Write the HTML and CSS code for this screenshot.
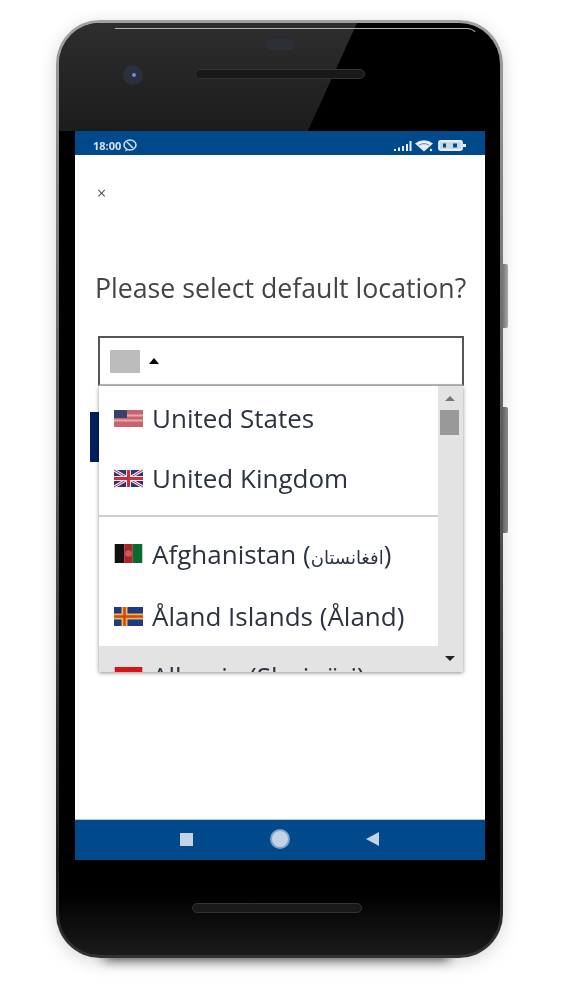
FILE: index.html
```html
<!DOCTYPE html>
<html lang="en">
<head>
    <meta charset="UTF-8">
    <meta name="viewport" content="width=device-width, initial-scale=1.0">
    <title>Select location</title>
    <link rel="stylesheet" href="styles.css">
</head>
<body>

<div class="phone">
    <div class="glare"></div>
    <div class="top-line"></div>
    <div class="side-btn power"></div>
    <div class="side-btn volume"></div>
    <div class="sensor"></div>
    <div class="camera"><span></span></div>
    <div class="speaker speaker-top"></div>

    <div class="screen">
        <div class="status-bar">
            <div class="status-left">
                <span class="time">18:00</span>
                <svg width="14" height="13" viewBox="0 0 14 13"><ellipse cx="7" cy="6" rx="6" ry="5" fill="none" stroke="#d5e0ec" stroke-width="1.500"/><path d="M4 3l6 6" stroke="#d5e0ec" stroke-width="1.500"/><path d="M3 10l-1 2.500 3-1.500z" fill="#d5e0ec"/></svg>
            </div>
            <div class="status-right">
                <svg width="19" height="10" viewBox="0 0 19 10"><path d="M1 8h2v2H1zM5 6.500h2V10H5zM9 5h2v5H9zM13 3h2v7h-2zM16.500 0h2v10h-2z" fill="#e6edf5"/></svg>
                <svg width="20" height="13" viewBox="0 0 20 13"><path d="M0 4.500Q9-2 18 4.500L9 12.500z" fill="#e6edf5"/><path d="M4 6.200Q9 3 14 6.200" stroke="#5f8ab5" fill="none"/><circle cx="16" cy="11" r="1.200" fill="#e6edf5"/></svg>
                <svg width="28" height="11" viewBox="0 0 28 11"><rect x="1" y="1" width="23" height="9" rx="1.500" fill="#c9d8e8" stroke="#e6edf5" stroke-width="1.800"/><rect x="5" y="3.500" width="3" height="4" fill="#004a8c"/><rect x="15" y="3.500" width="4" height="4" fill="#004a8c"/><path d="M25 4h3v3h-3z" fill="#e6edf5"/></svg>
            </div>
        </div>

        <div class="content">
            <div class="close">×</div>
            <h1>Please select default location?</h1>
            <div class="picker">
                <div class="select-box">
                    <span class="flag-empty"></span>
                    <span class="caret"></span>
                </div>
                <div class="dropdown">
                    <ul class="country-list">
                        <li>
                            <svg class="flag" viewBox="0 0 29 17"><rect width="29" height="17" fill="#c9646f"/><path d="M0 4.500h29v2H0zM0 9.500h29v2H0z" fill="#e2a8ae"/><rect width="13" height="8" fill="#3a3f70"/></svg>
                            United States
                        </li>
                        <li>
                            <svg class="flag" viewBox="0 0 29 17"><rect width="29" height="17" fill="#2b3474"/><path d="M0 0l29 17M29 0L0 17" stroke="#eee" stroke-width="3"/><path d="M0 0l29 17M29 0L0 17" stroke="#c8303f" stroke-width="1"/><path d="M14.500 0v17M0 8.500h29" stroke="#eee" stroke-width="5"/><path d="M14.500 0v17M0 8.500h29" stroke="#c8303f" stroke-width="3"/></svg>
                            United Kingdom
                        </li>
                        <li class="divider"></li>
                        <li class="tall">
                            <svg class="flag" viewBox="0 0 29 20"><rect width="10" height="20" fill="#111"/><rect x="10" width="9" height="20" fill="#a8262c"/><rect x="19" width="10" height="20" fill="#0a6b2e"/><circle cx="14.500" cy="10" r="3.500" fill="#c85a5a"/></svg>
                            <span>Afghanistan (<span class="native">افغانستان</span>)</span>
                        </li>
                        <li class="tall">
                            <svg class="flag" viewBox="0 0 29 19"><rect width="29" height="19" fill="#1d3a86"/><path d="M0 9.500h29M10.500 0v19" stroke="#e8c040" stroke-width="6"/><path d="M0 9.500h29M10.500 0v19" stroke="#d8401e" stroke-width="2.500"/></svg>
                            Åland Islands (Åland)
                        </li>
                        <li class="active">
                            <svg class="flag" viewBox="0 0 29 20"><rect width="29" height="20" fill="#d8141a"/><circle cx="14.500" cy="10" r="4" fill="#2a1010"/></svg>
                            Albania (Shqipëri)
                        </li>
                    </ul>
                    <div class="scrollbar">
                        <span class="arrow-up"></span>
                        <span class="thumb"></span>
                        <span class="arrow-down"></span>
                    </div>
                </div>
            </div>
            <div class="next-btn"></div>
        </div>

        <div class="nav-bar">
            <span class="nav-square"></span>
            <span class="nav-circle"></span>
            <span class="nav-back"></span>
        </div>
    </div>

    <div class="speaker speaker-bottom"></div>
    <div class="shadow"></div>
</div>

</body>
</html>
```

FILE: styles.css
```css
:root {
    --blue: #004a8c;
    --nav-icon: #c3d3e4;
    --scroll: #e3e3e3;
    --text: #2c3442;
}

body {
    box-sizing: border-box;
    min-height: 100vh;
    margin: 0;
    padding-top: 20px;
    overflow: hidden;
    background: #ffffff;
    font-family: "Open Sans", "DejaVu Sans", sans-serif;
}

/* Device frame */
.phone {
    position: relative;
    box-sizing: border-box;
    width: 447px;
    height: 938px;
    margin-left: 56px;
    padding: 108px 15px 0 16px;
    border: 3px solid transparent;
    border-radius: 44px;
    background:
        linear-gradient(#000 0, #000 870px, #1b1b1b 100%) padding-box,
        linear-gradient(#a0a0a0 0, #6a6a6a 35%, #3a3a3a 70%, #1c1c1c 90%, #333 100%) border-box;
    box-shadow: 0 4px 18px rgba(0, 0, 0, 0.16);
}

.glare {
    position: absolute;
    top: 0;
    left: 0;
    width: 298px;
    height: 108px;
    border-top-left-radius: 41px;
    background: linear-gradient(#2e2e2e, #1c1c1c);
    clip-path: polygon(0 0, 100% 0, 83.500% 100%, 0 100%);
}

.top-line {
    position: absolute;
    top: 5px;
    left: 56px;
    box-sizing: border-box;
    width: 364px;
    height: 12px;
    border-top: 1px solid #b4b4b4;
    border-right: 1px solid transparent;
    border-top-right-radius: 30px;
}

.side-btn {
    position: absolute;
    left: 444px;
    width: 5px;
    border-radius: 0 2px 2px 0;
    background: linear-gradient(90deg, #777, #a9a9a9);
}

.side-btn.power {
    top: 241px;
    height: 64px;
}

.side-btn.volume {
    top: 384px;
    height: 126px;
    background: linear-gradient(90deg, #666, #8a8a8a);
}

.sensor {
    position: absolute;
    top: 16px;
    left: 206px;
    width: 30px;
    height: 11px;
    border-radius: 6px;
    background: #2c2f36;
}

.camera {
    position: absolute;
    top: 42px;
    left: 64px;
    width: 20px;
    height: 20px;
    border-radius: 50%;
    background: #2a303c;
}

.camera span {
    position: absolute;
    top: 8px;
    left: 9px;
    width: 4px;
    height: 4px;
    border-radius: 50%;
    background: #6f88e0;
}

.speaker {
    position: absolute;
    width: 170px;
    height: 10px;
    box-sizing: border-box;
    border: 1px solid #333;
    border-radius: 5px;
    background: #191919;
}

.speaker-top {
    top: 46px;
    left: 136px;
}

.speaker-bottom {
    top: 880px;
    left: 133px;
}

.shadow {
    position: absolute;
    z-index: -1;
    top: 915px;
    left: 45px;
    width: 345px;
    height: 22px;
    background: #555;
    filter: blur(6px);
}

/* Screen */
.screen {
    display: flex;
    flex-direction: column;
    height: 729px;
    background: #ffffff;
}

.status-bar {
    display: flex;
    flex: none;
    justify-content: space-between;
    align-items: center;
    box-sizing: border-box;
    height: 24px;
    padding: 5px 19px 0 18px;
    background: var(--blue);
    color: #d5e0ec;
}

.status-left, .status-right {
    display: flex;
    align-items: center;
    gap: 2px;
    filter: blur(0.5px);
}

.status-right {
    gap: 3px;
}

.time {
    font-size: 11px;
    font-weight: 700;
}

.content {
    flex: 1;
    padding: 0 19px 0 15px;
}

.close {
    height: 26px;
    margin: 25px 0 0 7px;
    font-size: 16px;
    line-height: 26px;
    color: #555;
    filter: blur(0.4px);
}

h1 {
    margin: 64px 0 30px 5px;
    font-size: 26.700px;
    font-weight: 400;
    line-height: 36px;
    white-space: nowrap;
    color: #444;
    filter: blur(0.5px);
}

.picker {
    position: relative;
    margin-left: 8px;
    width: 366px;
}

.select-box {
    display: flex;
    align-items: center;
    gap: 8px;
    box-sizing: border-box;
    height: 50px;
    padding: 0 10px;
    border: 2px solid #555;
    border-bottom-color: #bbb;
    background: #ffffff;
}

.flag-empty {
    width: 30px;
    height: 23px;
    border-radius: 1px;
    background: #bcbcbc;
}

.caret {
    margin-left: 1px;
    border-left: 5px solid transparent;
    border-right: 5px solid transparent;
    border-bottom: 6px solid #000;
}

.dropdown {
    position: absolute;
    z-index: 2;
    top: 50px;
    left: 1px;
    display: flex;
    width: 364px;
    height: 286px;
    overflow: hidden;
    background: #ffffff;
    box-shadow: 0 1px 4px rgba(0, 0, 0, 0.45);
}

.country-list {
    flex: 1;
    margin: 0;
    padding: 2px 0 0;
    list-style: none;
    filter: blur(0.45px);
}

.country-list li {
    display: flex;
    align-items: center;
    gap: 9px;
    height: 60px;
    padding-left: 15px;
    font-size: 26px;
    white-space: nowrap;
    color: var(--text);
}

.country-list li.divider {
    height: 2px;
    margin: 7px 0 6px;
    padding: 0;
    background: #cfcfcf;
}

.country-list li.tall {
    height: 61.500px;
}

.country-list li.tall + li.tall {
    height: 59.500px;
    padding-top: 2px;
}

.country-list li.active {
    background: var(--scroll);
}

.native {
    font-size: 18px;
}

.flag {
    flex: none;
    width: 29px;
    height: 19px;
}

.scrollbar {
    position: relative;
    flex: none;
    display: flex;
    flex-direction: column;
    align-items: center;
    box-sizing: border-box;
    width: 25px;
    padding-right: 2px;
    background: var(--scroll);
}

.arrow-up {
    margin-top: 10px;
    border-left: 5px solid transparent;
    border-right: 5px solid transparent;
    border-bottom: 5px solid #777;
}

.thumb {
    width: 19px;
    height: 25px;
    margin-top: 9px;
    background: #999;
}

.arrow-down {
    margin-top: auto;
    margin-bottom: 11px;
    border-left: 5px solid transparent;
    border-right: 5px solid transparent;
    border-top: 5px solid #222;
}

.next-btn {
    width: 100px;
    height: 50px;
    margin: 26px 0 0 0;
    background: #001f5c;
}

/* Bottom nav */
.nav-bar {
    display: flex;
    flex: none;
    align-items: center;
    box-sizing: border-box;
    height: 41px;
    padding: 0 0 2px 105px;
    background: var(--blue);
    border-top: 1px solid #b8c8da;
}

.nav-square {
    width: 13px;
    height: 13px;
    background: var(--nav-icon);
}

.nav-circle {
    box-sizing: border-box;
    width: 20px;
    height: 20px;
    margin-left: 77px;
    border: 2px solid #7fa2c8;
    border-radius: 50%;
    background: var(--nav-icon);
}

.nav-back {
    margin-left: 76px;
    border-top: 7px solid transparent;
    border-bottom: 7px solid transparent;
    border-right: 13px solid var(--nav-icon);
}
```
